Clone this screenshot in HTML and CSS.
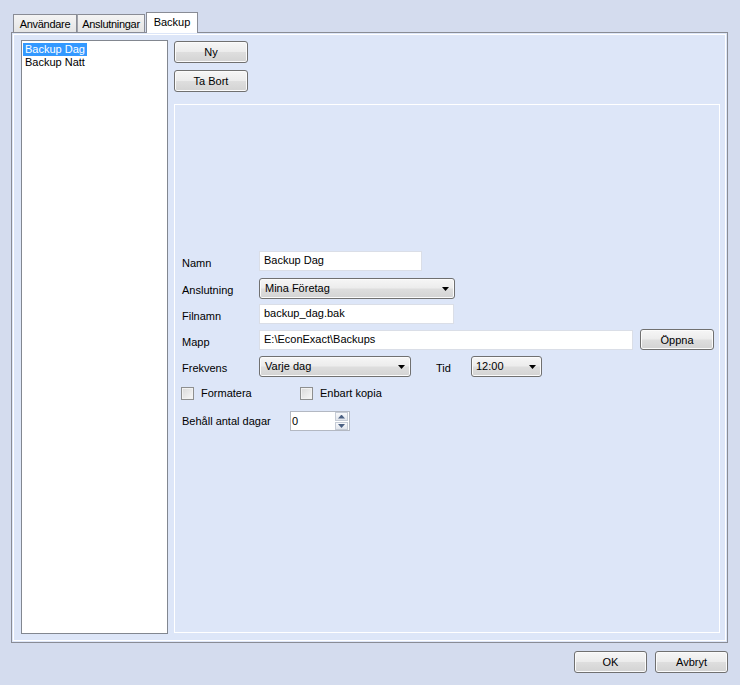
FILE: index.html
```html
<!DOCTYPE html>
<html>
<head>
<meta charset="utf-8">
<link rel="stylesheet" href="styles.css">
</head>
<body>
<div class="tabs">
  <div class="tab tab-users">Användare</div>
  <div class="tab tab-conn">Anslutningar</div>
  <div class="tab tab-backup active">Backup</div>
</div>
<div class="panel">
  <div class="list">
    <div class="item"><span class="sel">Backup Dag</span></div>
    <div class="item"><span>Backup Natt</span></div>
  </div>
  <div class="side">
    <div class="btn btn-side first">Ny</div>
    <div class="btn btn-side">Ta Bort</div>
    <div class="group">
      <div class="row">
        <div class="lbl">Namn</div>
        <div class="field w-namn">Backup Dag</div>
      </div>
      <div class="row mt7">
        <div class="lbl">Anslutning</div>
        <div class="combo w-conn">Mina Företag</div>
      </div>
      <div class="row mt5">
        <div class="lbl">Filnamn</div>
        <div class="field w-file">backup_dag.bak</div>
      </div>
      <div class="row mt6">
        <div class="lbl">Mapp</div>
        <div class="field w-dir">E:\EconExact\Backups</div>
        <div class="btn btn-open">Öppna</div>
      </div>
      <div class="row mt6">
        <div class="lbl">Frekvens</div>
        <div class="combo w-freq">Varje dag</div>
        <div class="lbl lbl-tid">Tid</div>
        <div class="combo w-time">12:00</div>
      </div>
      <div class="row mt10">
        <div class="check check-first"><span class="box"></span><span>Formatera</span></div>
        <div class="check"><span class="box"></span><span>Enbart kopia</span></div>
      </div>
      <div class="row mt11">
        <div class="lbl lbl-keep">Behåll antal dagar</div>
        <div class="spin">
          <div class="spin-val">0</div>
          <div class="spin-btns">
            <div class="sb sb-up"><span class="arr arr-up"></span></div>
            <div class="sb sb-down"><span class="arr arr-down"></span></div>
          </div>
        </div>
      </div>
    </div>
  </div>
</div>
<div class="footer">
  <div class="btn btn-foot">OK</div>
  <div class="btn btn-foot">Avbryt</div>
</div>
</body>
</html>
```

FILE: styles.css
```css
* { box-sizing: border-box; }

body {
  margin: 0;
  width: 740px;
  height: 685px;
  overflow: hidden;
  background: #d4dcee;
  font-family: "Liberation Sans", Arial, sans-serif;
  font-size: 11px;
  line-height: 13px;
  color: #000;
}

/* Tabs */
.tabs {
  display: flex;
  align-items: flex-end;
  height: 32px;
  padding: 12px 0 0 13px;
}
.tab {
  height: 18px;
  border: 1px solid #898c95;
  border-bottom: 0;
  background: linear-gradient(#f4f4f4, #e4e4e4);
  padding-top: 3px;
  text-align: center;
  white-space: nowrap;
  letter-spacing: -0.3px;
}
.tab-users { width: 64px; }
.tab-conn { width: 68px; border-left-color: #a0a3aa; }
.tab-backup { width: 52px; margin-left: 1px; letter-spacing: 0; }
.tab.active {
  height: 21px;
  margin-bottom: -1px;
  background: #fff;
  position: relative;
  z-index: 1;
}

/* Main panel */
.panel {
  height: 611px;
  margin: 0 12px 0 11px;
  border: 1px solid #898c95;
  background: #dde6f8;
  box-shadow: inset 0 0 0 1px #dde6f8, inset 0 0 0 2px #fff;
  display: flex;
  gap: 6px;
  padding: 7px 7px 8px 9px;
}

.list {
  width: 147px;
  flex: none;
  background: #fff;
  border: 1px solid #828790;
  padding: 2px 0 0 1px;
}
.item { height: 13px; white-space: nowrap; }
.item span { display: inline-block; padding: 0 2px; }
.item .sel { background: #3399ff; color: #fff; }

.side {
  flex: 1;
  display: flex;
  flex-direction: column;
  align-items: flex-start;
  padding-bottom: 1px;
}

/* Buttons */
.btn {
  height: 22px;
  border: 1px solid #707070;
  border-radius: 3px;
  background: linear-gradient(#f6f6f6 0%, #ececec 48%, #dedede 52%, #d3d3d3 100%);
  box-shadow: inset 0 0 0 1px #fbfbfb;
  text-align: center;
  padding-top: 1px;
  line-height: 19px;
  white-space: nowrap;
}
.btn-side { width: 74px; margin-top: 7px; }
.btn-side.first { margin-top: 1px; }
.btn-open { width: 74px; height: 21px; margin: -1px 0 0 7px; line-height: 18px; }
.btn-foot { width: 73px; }

/* Group */
.group {
  align-self: stretch;
  flex: 1;
  margin-top: 12px;
  border: 1px solid #fff;
  padding: 146px 0 0 7px;
}

.row { display: flex; align-items: flex-start; }
.mt5 { margin-top: 5px; }
.mt6 { margin-top: 6px; }
.mt7 { margin-top: 7px; }
.mt10 { margin-top: 10px; }
.mt11 { margin-top: 11px; }

.lbl { width: 77px; padding-top: 6px; white-space: nowrap; }
.lbl-tid { width: 35px; margin-left: 25px; }
.lbl-keep { width: 108px; padding-top: 4px; }

.field {
  height: 20px;
  background: #fff;
  border: 1px solid #dadee7;
  padding: 2px 0 0 4px;
  white-space: nowrap;
}
.w-namn { width: 163px; }
.w-file { width: 195px; }
.w-dir { width: 374px; }

.combo {
  position: relative;
  height: 21px;
  border: 1px solid #707070;
  border-radius: 3px;
  background: linear-gradient(#f6f6f6 0%, #ececec 48%, #dedede 52%, #d3d3d3 100%);
  box-shadow: inset 0 0 0 1px #fbfbfb;
  padding: 3px 0 0 5px;
  white-space: nowrap;
}
.combo::after {
  content: "";
  position: absolute;
  right: 5px;
  top: 8px;
  width: 7px;
  height: 4px;
  background: #000;
  clip-path: polygon(0 0, 100% 0, 50% 100%);
}
.w-conn { width: 196px; }
.w-freq { width: 152px; }
.w-time { width: 71px; padding-left: 4px; }

/* Checkboxes */
.check { display: flex; gap: 7px; white-space: nowrap; }
.check-first { width: 119px; margin-left: -1px; }
.box {
  width: 13px;
  height: 13px;
  flex: none;
  border: 1px solid #8e8f8f;
  background: linear-gradient(135deg, #d9d9d9, #f8f8f8);
  box-shadow: inset 0 0 0 1px #f2f2f2;
}

/* Spin */
.spin {
  width: 60px;
  height: 20px;
  display: flex;
  background: #fff;
  border: 1px solid #b3b8c2;
}
.spin-val { flex: 1; padding: 3px 0 0 1px; }
.spin-btns {
  width: 13px;
  margin: 0 1px 0 0;
  display: flex;
  flex-direction: column;
  gap: 1px;
}
.sb {
  display: flex;
  align-items: center;
  justify-content: center;
  border: 1px solid #c6ccd6;
  background: linear-gradient(#f8f9fb, #e2e6ed);
}
.sb-up { height: 9px; }
.sb-down { height: 8px; }
.arr {
  width: 7px;
  height: 4px;
  background: #4c6183;
}
.arr-up { clip-path: polygon(50% 0, 100% 100%, 0 100%); }
.arr-down { clip-path: polygon(0 0, 100% 0, 50% 100%); }

/* Footer */
.footer {
  display: flex;
  justify-content: flex-end;
  gap: 8px;
  padding: 8px 12px 0 0;
}
```
